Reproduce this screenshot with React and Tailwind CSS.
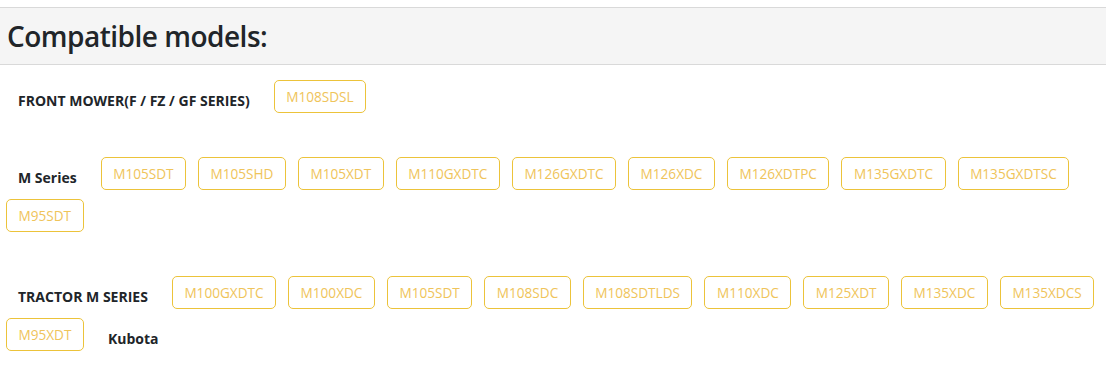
const sections = [
  { label: 'FRONT MOWER(F / FZ / GF SERIES)', models: ['M108SDSL'] },
  {
    label: 'M Series',
    models: ['M105SDT', 'M105SHD', 'M105XDT', 'M110GXDTC', 'M126GXDTC', 'M126XDC', 'M126XDTPC', 'M135GXDTC', 'M135GXDTSC', 'M95SDT'],
  },
  {
    label: 'TRACTOR M SERIES',
    models: ['M100GXDTC', 'M100XDC', 'M105SDT', 'M108SDC', 'M108SDTLDS', 'M110XDC', 'M125XDT', 'M135XDC', 'M135XDCS', 'M95XDT'],
    brand: 'Kubota',
  },
];

function Label({ children }) {
  return (
    <span className="mx-[18px] pt-2 text-[14px] font-bold text-[#212529] leading-none">{children}</span>
  );
}

function ModelChip({ name }) {
  return (
    <span className="mx-[6px] mt-[4px] mb-[5px] h-[33px] px-[11.5px] flex items-center border border-[#ecc33a] rounded-[5px] text-[13.6px] text-[#efc45a] leading-none">
      {name}
    </span>
  );
}

export default function App() {
  return (
    <div className="w-[1106px] h-[366px] bg-white pt-[7px]" style={{ fontFamily: '"Open Sans", sans-serif' }}>
      {/* Header band */}
      <div className="h-[58px] bg-[#f5f5f5] border-y border-[#d9d9d9] flex items-center px-[7px]">
        <h2 className="text-[28px] font-semibold text-[#212529] leading-none tracking-[-0.5px]">Compatible models:</h2>
      </div>

      <div className="pt-[11px] space-y-[35px]">
        {sections.map((s) => (
          <div key={s.label} className="flex flex-wrap items-center">
            <Label>{s.label}</Label>
            {s.models.map((m) => (
              <ModelChip key={m} name={m} />
            ))}
            {s.brand && <Label>{s.brand}</Label>}
          </div>
        ))}
      </div>
    </div>
  );
}
